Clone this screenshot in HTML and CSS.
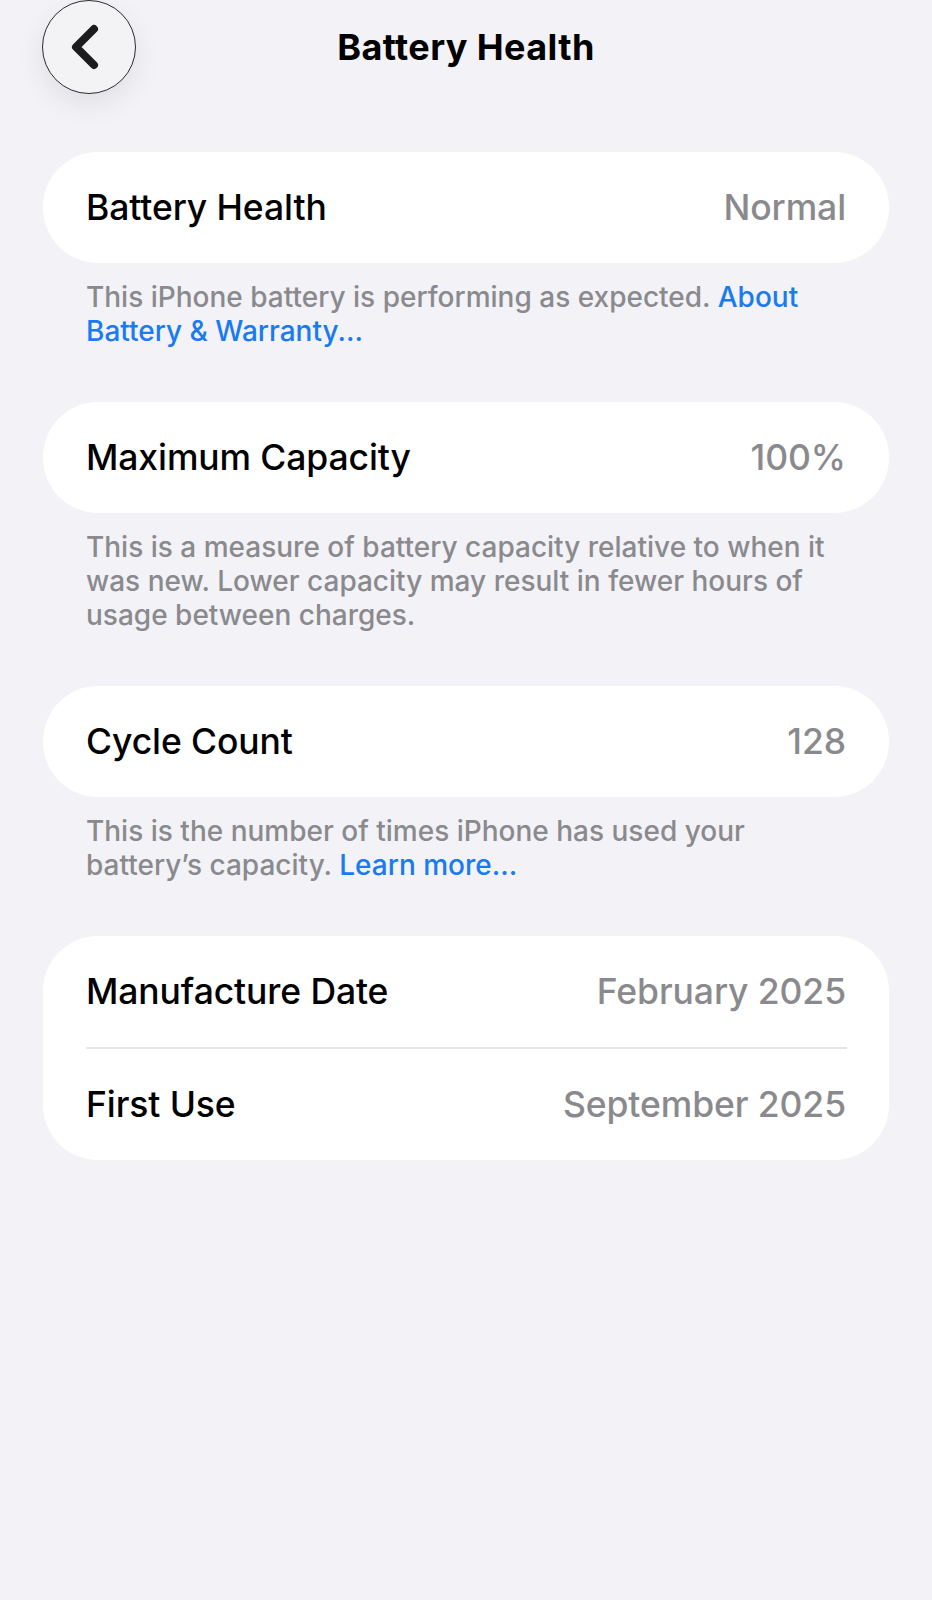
FILE: index.html
```html
<!DOCTYPE html>
<html>
<head>
    <title>Battery Health</title>
    <link rel="stylesheet" href="styles.css">
</head>
<body>
    <div class="nav">
        <div class="nav-left">
            <button class="back-btn" type="button" aria-label="Back">
                <svg width="40" height="48" viewBox="0 0 40 48">
                    <path d="M28 6 L10 24 L28 42" fill="none" stroke="#1c1c1e" stroke-width="8" stroke-linecap="round" stroke-linejoin="round"/>
                </svg>
            </button>
        </div>
        <h1 class="nav-title">Battery Health</h1>
        <div></div>
    </div>

    <div class="content">
        <div class="group">
            <div class="row">
                <span class="label">Battery Health</span>
                <span class="value">Normal</span>
            </div>
        </div>
        <p class="footer">This iPhone battery is performing as expected. <a href="#">About Battery &amp; Warranty...</a></p>

        <div class="group">
            <div class="row">
                <span class="label">Maximum Capacity</span>
                <span class="value">100%</span>
            </div>
        </div>
        <p class="footer">This is a measure of battery capacity relative to when it was new. Lower capacity may result in fewer hours of usage between charges.</p>

        <div class="group">
            <div class="row">
                <span class="label">Cycle Count</span>
                <span class="value">128</span>
            </div>
        </div>
        <p class="footer">This is the number of times iPhone has used your battery’s capacity. <a href="#">Learn more...</a></p>

        <div class="group">
            <div class="row">
                <span class="label">Manufacture Date</span>
                <span class="value">February 2025</span>
            </div>
            <div class="separator"></div>
            <div class="row">
                <span class="label">First Use</span>
                <span class="value">September 2025</span>
            </div>
        </div>
    </div>
</body>
</html>
```

FILE: styles.css
```css
body {
    font-family: Inter, "Noto Sans", sans-serif;
    margin: 0;
    background-color: #f2f2f7;
    color: #000;
}
.nav {
    display: grid;
    grid-template-columns: 1fr auto 1fr;
    align-items: center;
    height: 94px;
}
.nav-left {
    padding-left: 42px;
}
.back-btn {
    width: 94px;
    height: 94px;
    border-radius: 50%;
    border: 1.5px solid #2c2c2e;
    background: #f3f3f6;
    box-shadow: 0 10px 28px rgba(0, 0, 0, 0.08);
    display: flex;
    align-items: center;
    justify-content: center;
    padding: 0 6px 0 0;
    box-sizing: border-box;
    cursor: pointer;
}
.nav-title {
    margin: 0;
    font-size: 36px;
    font-weight: 700;
    letter-spacing: 0.4px;
}
.content {
    padding: 58px 43px 0;
}
.group {
    background: #fff;
    border-radius: 55px;
}
.row {
    display: flex;
    justify-content: space-between;
    align-items: center;
    height: 111px;
    padding: 0 43px;
}
.label {
    font-size: 35.5px;
    font-weight: 500;
    letter-spacing: -0.1px;
}
.value {
    font-size: 35.5px;
    font-weight: 500;
    letter-spacing: -0.1px;
    color: #8a8a8e;
}
.separator {
    height: 2px;
    background: #e3e3e8;
    margin: 0 42px 0 43px;
}
.footer {
    margin: 17px 0 54px;
    padding: 0 43px;
    font-size: 28px;
    font-weight: 500;
    line-height: 34px;
    color: #8a8a8e;
}
.footer a {
    color: #1a7af0;
    text-decoration: none;
}
```
